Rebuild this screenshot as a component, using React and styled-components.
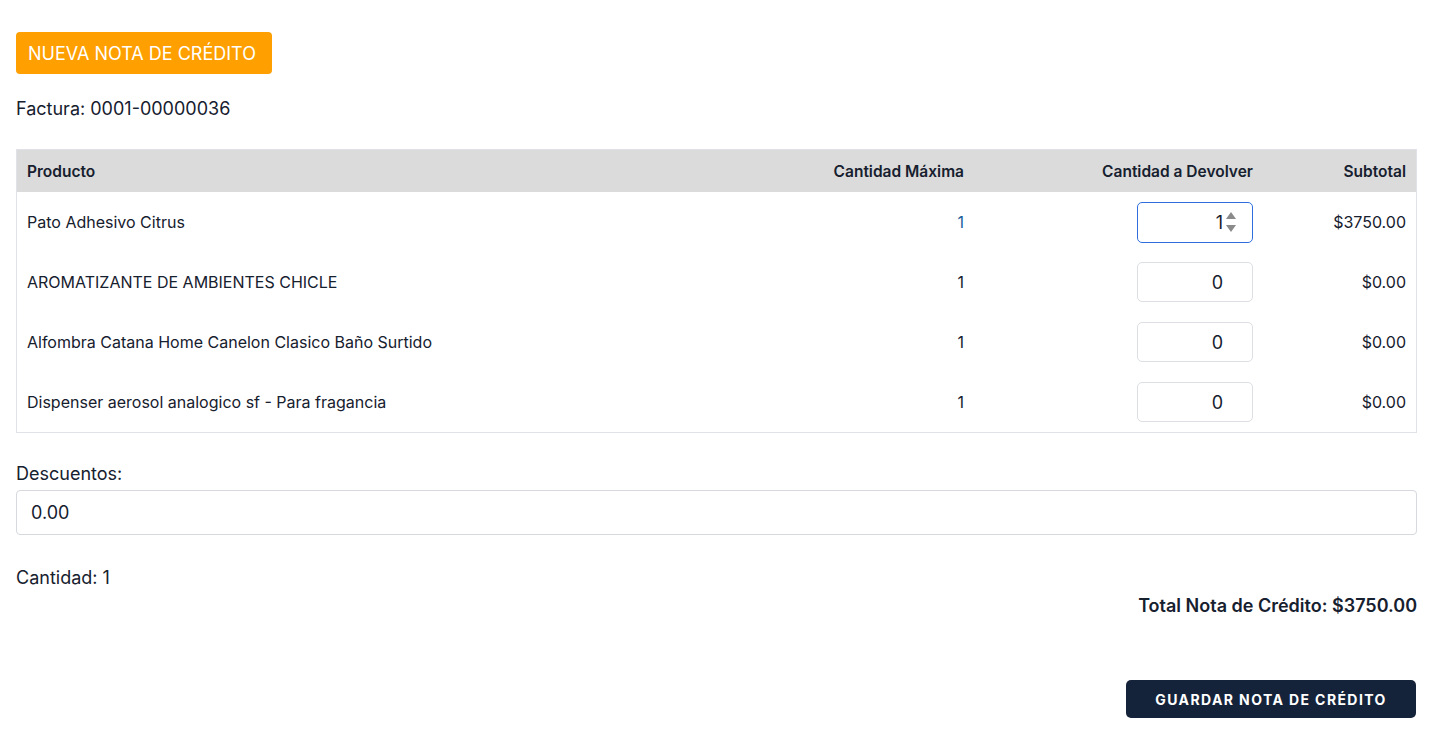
import styled, { createGlobalStyle } from 'styled-components';

const GlobalStyle = createGlobalStyle`
  body {
    margin: 0;
    background: #fff;
    font-family: Inter, "Noto Sans", sans-serif;
    color: #16202e;
  }
`;

const Page = styled.div`
  padding: 32px 25px 26px 16px;
  display: flex;
  flex-direction: column;
`;

const Badge = styled.div`
  align-self: flex-start;
  background-color: #ff9f00;
  color: #fff;
  font-size: 18px;
  height: 42px;
  padding: 0 16px 0 12px;
  display: flex;
  align-items: center;
  border-radius: 4px;
`;

const InvoiceLine = styled.p`
  font-size: 18px;
  margin: 24px 0 30px;
`;

const Table = styled.table`
  width: 100%;
  table-layout: fixed;
  border-collapse: collapse;
  border: 1px solid #dfe3e8;
  font-size: 16px;
`;

const HeadCell = styled.th`
  background-color: #dbdbdb;
  font-weight: 600;
  font-size: 15.5px;
  height: 42px;
  padding: 0 10px;
  text-align: ${(p) => (p.$right ? 'right' : 'left')};
  width: ${(p) => p.$w || 'auto'};
`;

const Cell = styled.td`
  height: 60px;
  padding: 0 10px;
  text-align: ${(p) => (p.$right ? 'right' : 'left')};
  color: ${(p) => (p.$accent ? '#1b5d99' : 'inherit')};
`;

const QtyWrap = styled.div`
  position: relative;
  display: inline-block;
`;

const QtyInput = styled.input`
  width: 116px;
  height: ${(p) => (p.$active ? '41px' : '40px')};
  box-sizing: border-box;
  border: ${(p) => (p.$active ? '1.5px solid #2f6fdd' : '1px solid #dcdfe3')};
  border-radius: 5px;
  padding: 0 29px 0 10px;
  font-family: inherit;
  font-size: 18px;
  color: #16202e;
  text-align: right;
  outline: none;
  background: #fff;
`;

const Spinner = styled.svg`
  position: absolute;
  right: 17px;
  top: 50%;
  transform: translateY(-50%);
`;

const Label = styled.div`
  font-size: 18px;
  margin: 30px 0 6px;
`;

const DiscountInput = styled.input`
  width: 100%;
  box-sizing: border-box;
  height: 45px;
  border: 1px solid #d6d9dd;
  border-radius: 4px;
  padding: 0 14px;
  font-family: inherit;
  font-size: 18px;
  color: #16202e;
  outline: none;
`;

const CountLine = styled.div`
  font-size: 18px;
  margin-top: 32px;
`;

const TotalLine = styled.div`
  align-self: flex-end;
  font-size: 18px;
  font-weight: 600;
  margin-top: 7px;
`;

const SaveButton = styled.button`
  align-self: flex-end;
  margin: 64px 1px 0 0;
  width: 290px;
  height: 38px;
  background-color: #15233a;
  color: #fff;
  border: none;
  border-radius: 5px;
  font-family: inherit;
  font-size: 14px;
  font-weight: 700;
  letter-spacing: 1.4px;
  text-transform: uppercase;
`;

const items = [
  { name: 'Pato Adhesivo Citrus', max: 1, qty: 1, subtotal: '$3750.00', active: true },
  { name: 'AROMATIZANTE DE AMBIENTES CHICLE', max: 1, qty: 0, subtotal: '$0.00' },
  { name: 'Alfombra Catana Home Canelon Clasico Baño Surtido', max: 1, qty: 0, subtotal: '$0.00' },
  { name: 'Dispenser aerosol analogico sf - Para fragancia', max: 1, qty: 0, subtotal: '$0.00' },
];

export default function App() {
  return (
    <>
      <GlobalStyle />
      <Page>
        <Badge>NUEVA NOTA DE CRÉDITO</Badge>
        <InvoiceLine>Factura: 0001-00000036</InvoiceLine>
        <Table>
          <thead>
            <tr>
              <HeadCell>Producto</HeadCell>
              <HeadCell $right $w="180px">Cantidad Máxima</HeadCell>
              <HeadCell $right $w="269px">Cantidad a Devolver</HeadCell>
              <HeadCell $right $w="133px">Subtotal</HeadCell>
            </tr>
          </thead>
          <tbody>
            {items.map((it) => (
              <tr key={it.name}>
                <Cell>{it.name}</Cell>
                <Cell $right $accent={it.active}>{it.max}</Cell>
                <Cell $right>
                  <QtyWrap>
                    <QtyInput $active={it.active} type="text" defaultValue={it.qty} />
                    {it.active && (
                      <Spinner width="10" height="24" viewBox="0 0 10 24">
                        <path d="M5 2 L10 9 L0 9 Z" fill="#8a8a8a" />
                        <path d="M0 15 L10 15 L5 22 Z" fill="#8a8a8a" />
                      </Spinner>
                    )}
                  </QtyWrap>
                </Cell>
                <Cell $right>{it.subtotal}</Cell>
              </tr>
            ))}
          </tbody>
        </Table>
        <Label>Descuentos:</Label>
        <DiscountInput type="text" defaultValue="0.00" />
        <CountLine>Cantidad: 1</CountLine>
        <TotalLine>Total Nota de Crédito: $3750.00</TotalLine>
        <SaveButton>Guardar nota de crédito</SaveButton>
      </Page>
    </>
  );
}
